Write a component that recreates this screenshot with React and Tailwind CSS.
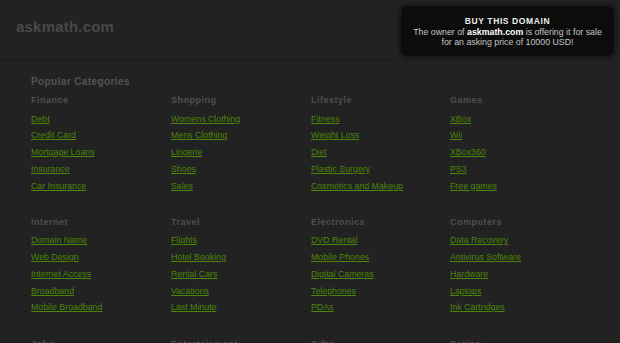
import React from "react"

const sections = [
    [
        { title: "Finance", links: ["Debt", "Credit Card", "Mortgage Loans", "Insurance", "Car Insurance"] },
        { title: "Shopping", links: ["Womens Clothing", "Mens Clothing", "Lingerie", "Shoes", "Sales"] },
        { title: "Lifestyle", links: ["Fitness", "Weight Loss", "Diet", "Plastic Surgery", "Cosmetics and Makeup"] },
        { title: "Games", links: ["XBox", "Wii", "XBox360", "PS3", "Free games"] },
    ],
    [
        { title: "Internet", links: ["Domain Name", "Web Design", "Internet Access", "Broadband", "Mobile Broadband"] },
        { title: "Travel", links: ["Flights", "Hotel Booking", "Rental Cars", "Vacations", "Last Minute"] },
        { title: "Electronics", links: ["DVD Rental", "Mobile Phones", "Digital Cameras", "Telephones", "PDAs"] },
        { title: "Computers", links: ["Data Recovery", "Antivirus Software", "Hardware", "Laptops", "Ink Cartridges"] },
    ],
    [
        { title: "Jobs", links: [] },
        { title: "Entertainment", links: [] },
        { title: "Gifts", links: [] },
        { title: "Dating", links: [] },
    ],
]

export default function App() {
    return (
        <div className="w-[620px] h-[343px] overflow-hidden bg-[#222222] font-['Liberation_Sans',Arial,sans-serif]">

            {/* Header */}
            <div className="relative h-[61px] border-b border-[#1b1b1b] flex items-center pl-4">
                <div className="text-[15px] font-bold text-[#484848] tracking-[0.2px] -mt-[6px]">askmath.com</div>

                {/* Buy box */}
                <div className="absolute left-[399px] top-[4px] w-[217px] h-[54px] rounded-[9px] border-2 border-[#1a1a1a] bg-[#0c0c0c] shadow-[0_0_3px_#111] flex flex-col items-center pt-[9px] text-[#c4c4c4]">
                    <div className="text-[8.5px] font-bold text-[#eeeeee] tracking-[0.6px] leading-[12px]">BUY THIS DOMAIN</div>
                    <div className="text-[8.8px] leading-[10px] text-center">
                        The owner of <span className="font-bold text-white">askmath.com</span> is offering it for sale
                        <br />for an asking price of 10000 USD!
                    </div>
                </div>
            </div>

            {/* Categories */}
            <div className="pl-[31px] pt-[14px]">
                <div className="text-[10px] font-bold text-[#545454] tracking-[0.4px] leading-[14px]">Popular Categories</div>

                <div className="flex flex-col gap-[20.5px] mt-[4px]">
                    {sections.map((row, i) => (
                        <div key={i} className="grid grid-cols-[140px_140px_139px_140px]">
                            {row.map(col => (
                                <div key={col.title}>
                                    <div className="text-[9px] font-bold text-[#4f4f4f] tracking-[0.5px] leading-[14px]">{col.title}</div>
                                    <div className="flex flex-col mt-[3.5px]">
                                        {col.links.map(l => (
                                            <a key={l} className="text-[8.8px] text-[#4b8606] underline underline-offset-[1px] leading-[16.75px] w-fit cursor-pointer">{l}</a>
                                        ))}
                                    </div>
                                </div>
                            ))}
                        </div>
                    ))}
                </div>
            </div>
        </div>
    )
}
